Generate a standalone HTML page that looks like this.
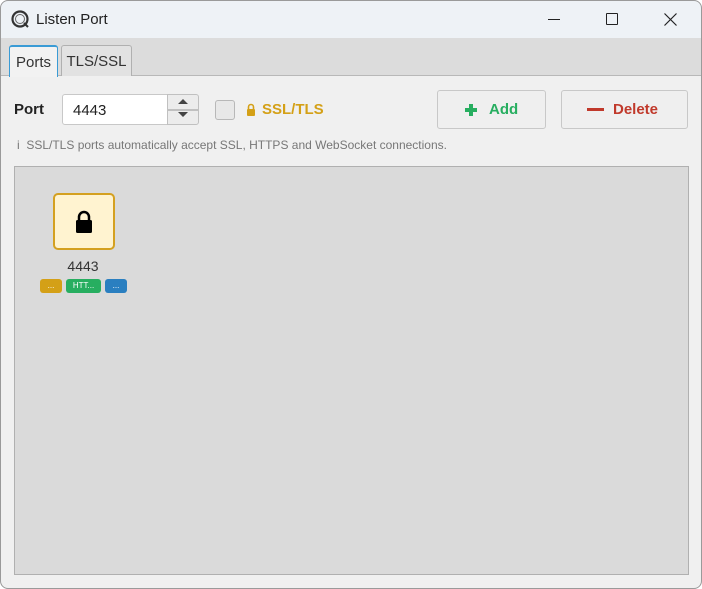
<!DOCTYPE html>
<html><head><style>
*{box-sizing:border-box;margin:0;padding:0}
body{width:702px;height:589px;background:#fff;font-family:"Liberation Sans",sans-serif;position:relative;overflow:hidden}
.win{position:absolute;left:0;top:0;width:702px;height:589px;border-radius:8px;background:#f0f0f0;overflow:hidden}
.frame{position:absolute;left:0;top:0;width:702px;height:589px;border:1px solid #9a9a9a;border-radius:8px;pointer-events:none}
.title{position:absolute;left:0;top:0;width:702px;height:38px;background:#eef2f6}
.abs{position:absolute}
.tabbar{position:absolute;left:0;top:38px;width:702px;height:38px;background:#dcdcdc;border-bottom:1px solid #b8b8b8}
.tab{position:absolute;top:7px;height:31px;border:1px solid #b0b0b0;border-bottom:none;border-radius:3px 3px 0 0;background:#e2e2e2;font-size:15px;color:#333;padding:7px 0 0 0;text-align:center}
.btn{position:absolute;top:90px;height:39px;border:1px solid #c8c8c8;border-radius:3px;background:#efefef;font-weight:bold;font-size:15px}
.badge{position:absolute;top:279px;height:14px;border-radius:3px;color:#fff;font-size:8px;text-align:center;line-height:13px}
</style></head><body>
<div class="win">
<div class="title">
<svg class="abs" style="left:10px;top:9px" width="20" height="20" viewBox="0 0 20 20"><circle cx="10" cy="10" r="7.5" fill="none" stroke="#333" stroke-width="2.2"/><circle cx="10" cy="10" r="4.5" fill="none" stroke="#666" stroke-width="1"/><path d="M14 14 L18 18" stroke="#333" stroke-width="2"/></svg>
<div class="abs" style="left:36px;top:11px;font-size:15px;color:#222">Listen Port</div>
<div class="abs" style="left:548px;top:19px;width:12px;height:1px;background:#222"></div>
<div class="abs" style="left:606px;top:13px;width:12px;height:12px;border:1.3px solid #222;border-radius:1px"></div>
<svg class="abs" style="left:664px;top:13px" width="13" height="13"><path d="M0.5 0.5L12.5 12.5M12.5 0.5L0.5 12.5" stroke="#222" stroke-width="1.2"/></svg>
</div>
<div class="tabbar">
<div class="tab" style="left:9px;width:49px;background:#f2f2f2;border-color:#3a9bd5;border-top:2px solid #3a9bd5;height:32px">Ports</div>
<div class="tab" style="left:61px;width:71px">TLS/SSL</div>
</div>
<div class="abs" style="left:14px;top:101px;font-size:15px;font-weight:bold;color:#222">Port</div>
<div class="abs" style="left:62px;top:94px;width:106px;height:31px;background:#fff;border:1px solid #c8c8c8;border-radius:3px 0 0 3px;font-size:15px;padding:7px 0 0 10px;color:#222">4443</div>
<div class="abs" style="left:167px;top:94px;width:32px;height:16px;background:#ececec;border:1px solid #c0c0c0;border-radius:0 3px 0 0"></div>
<div class="abs" style="left:167px;top:110px;width:32px;height:15px;background:#ececec;border:1px solid #c0c0c0;border-radius:0 0 3px 0"></div>
<svg class="abs" style="left:177px;top:98px" width="12" height="24"><path d="M1 6L6 1L11 6Z M1 14L6 19L11 14Z" fill="#444"/></svg>
<div class="abs" style="left:215px;top:100px;width:20px;height:20px;border:1px solid #b8b8b8;border-radius:3px;background:#e8e8e8"></div>
<svg class="abs" style="left:246px;top:103px" width="10" height="13"><path d="M2.5 6V4a2.5 2.5 0 0 1 5 0v2" fill="none" stroke="#d4a017" stroke-width="1.6"/><rect x="1" y="6" width="8" height="7" rx="1" fill="#d4a017"/></svg>
<div class="abs" style="left:262px;top:101px;font-size:15px;font-weight:bold;color:#d4a017">SSL/TLS</div>
<div class="btn" style="left:437px;width:109px;color:#27ae60"><svg class="abs" style="left:27px;top:13px" width="12" height="12"><path d="M4 0h4v4h4v4h-4v4h-4v-4h-4v-4h4z" fill="#27ae60"/></svg><span class="abs" style="left:51px;top:10px">Add</span></div>
<div class="btn" style="left:561px;width:127px;color:#c0392b"><span class="abs" style="left:25px;top:17px;width:17px;height:2.5px;background:#c0392b"></span><span class="abs" style="left:51px;top:10px">Delete</span></div>
<div class="abs" style="left:17px;top:138px;font-size:12px;color:#777">i&nbsp; SSL/TLS ports automatically accept SSL, HTTPS and WebSocket connections.</div>
<div class="abs" style="left:14px;top:166px;width:675px;height:409px;background:#dadada;border:1px solid #b0b0b0"></div>
<div class="abs" style="left:53px;top:193px;width:62px;height:57px;background:#fff3d0;border:2px solid #d4a020;border-radius:5px"></div>
<svg class="abs" style="left:74px;top:210px" width="20" height="24"><path d="M5 10V7a5 5 0 0 1 10 0v3" fill="none" stroke="#000" stroke-width="2.5"/><rect x="2" y="10" width="16" height="13" rx="1.5" fill="#000"/></svg>
<div class="abs" style="left:63px;top:258px;width:40px;text-align:center;font-size:14px;color:#333">4443</div>
<div class="badge" style="left:40px;width:22px;background:#d4a017">...</div>
<div class="badge" style="left:66px;width:35px;background:#27ae60">HTT...</div>
<div class="badge" style="left:105px;width:22px;background:#2a7fc0">...</div>
</div>
<div class="frame"></div>
</body></html>
